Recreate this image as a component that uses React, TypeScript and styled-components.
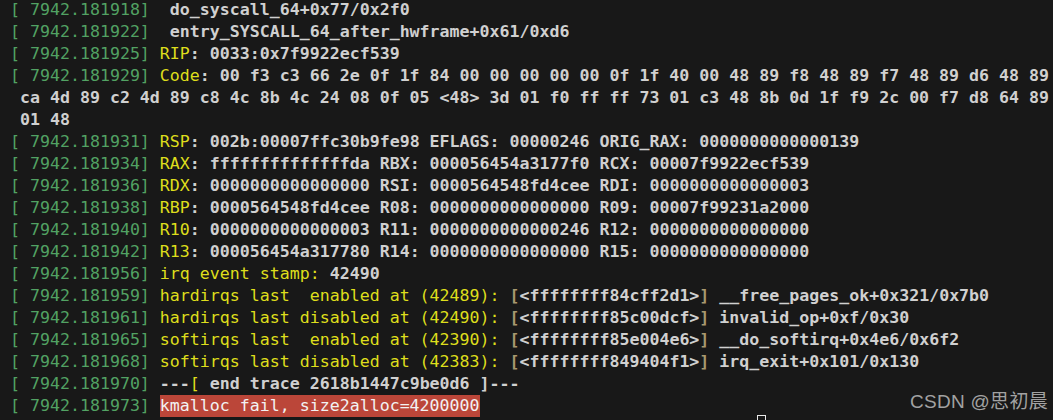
import React from "react";
import styled, { createGlobalStyle } from "styled-components";

const Global = createGlobalStyle`
  html, body {
    margin: 0;
    padding: 0;
    background: #181818;
    overflow: hidden;
  }
  #root {
    width: 1053px;
    height: 420px;
  }
`;

const Screen = styled.div`
  position: relative;
  width: 1053px;
  height: 420px;
  background: #181818;
  overflow: hidden;
`;

const Terminal = styled.div`
  display: flex;
  flex-direction: column;
  margin-top: -1px;
  padding-left: 10px;
  font-family: "DejaVu Sans Mono", "Liberation Mono", monospace;
  font-size: 16.6px;
  line-height: 22px;
  white-space: pre;
`;

const Line = styled.div`
  display: flex;
  height: 22px;
`;

const Stamp = styled.span`
  color: #52a263;
  font-weight: normal;
`;

type Kind = "w" | "y" | "b" | "hl";

const Seg = styled.span<{ $kind: Kind }>`
  color: ${(p) =>
    p.$kind === "y"
      ? "#dede1c"
      : p.$kind === "b"
      ? "#a8996f"
      : p.$kind === "hl"
      ? "#f2f2f2"
      : "#d0d0d0"};
  font-weight: ${(p) => (p.$kind === "y" || p.$kind === "hl" ? "normal" : "bold")};
  background: ${(p) => (p.$kind === "hl" ? "#bb4639" : "transparent")};
`;

const Watermark = styled.div`
  position: absolute;
  right: 5px;
  bottom: 6px;
  font-family: "Liberation Sans", "Noto Sans CJK SC", sans-serif;
  font-size: 19px;
  line-height: 24px;
  color: #a2a2a2;
  letter-spacing: 0.3px;
`;

const Cursor = styled.div`
  position: absolute;
  left: 757px;
  top: 415px;
  width: 7px;
  height: 8px;
  border: 1.5px solid #e8e8e8;
  background: #181818;
`;

type Row = { t?: string; parts: [Kind, string][] };

const rows: Row[] = [
  { t: "181918", parts: [["w", " do_syscall_64+0x77/0x2f0"]] },
  { t: "181922", parts: [["w", " entry_SYSCALL_64_after_hwframe+0x61/0xd6"]] },
  { t: "181925", parts: [["y", "RIP"], ["w", ": 0033:0x7f9922ecf539"]] },
  {
    t: "181929",
    parts: [
      ["y", "Code"],
      ["w", ": 00 f3 c3 66 2e 0f 1f 84 00 00 00 00 00 0f 1f 40 00 48 89 f8 48 89 f7 48 89 d6 48 89"],
    ],
  },
  {
    parts: [
      ["w", " ca 4d 89 c2 4d 89 c8 4c 8b 4c 24 08 0f 05 <48> 3d 01 f0 ff ff 73 01 c3 48 8b 0d 1f f9 2c 00 f7 d8 64 89"],
    ],
  },
  { parts: [["w", " 01 48"]] },
  {
    t: "181931",
    parts: [["y", "RSP"], ["w", ": 002b:00007ffc30b9fe98 EFLAGS: 00000246 ORIG_RAX: 0000000000000139"]],
  },
  {
    t: "181934",
    parts: [["y", "RAX"], ["w", ": ffffffffffffffda RBX: 000056454a3177f0 RCX: 00007f9922ecf539"]],
  },
  {
    t: "181936",
    parts: [["y", "RDX"], ["w", ": 0000000000000000 RSI: 0000564548fd4cee RDI: 0000000000000003"]],
  },
  {
    t: "181938",
    parts: [["y", "RBP"], ["w", ": 0000564548fd4cee R08: 0000000000000000 R09: 00007f99231a2000"]],
  },
  {
    t: "181940",
    parts: [["y", "R10"], ["w", ": 0000000000000003 R11: 0000000000000246 R12: 0000000000000000"]],
  },
  {
    t: "181942",
    parts: [["y", "R13"], ["w", ": 000056454a317780 R14: 0000000000000000 R15: 0000000000000000"]],
  },
  { t: "181956", parts: [["y", "irq event stamp: "], ["w", "42490"]] },
  {
    t: "181959",
    parts: [
      ["y", "hardirqs last  enabled at (42489): "],
      ["b", "["],
      ["w", "<ffffffff84cff2d1>"],
      ["b", "]"],
      ["w", " __free_pages_ok+0x321/0x7b0"],
    ],
  },
  {
    t: "181961",
    parts: [
      ["y", "hardirqs last disabled at (42490): "],
      ["b", "["],
      ["w", "<ffffffff85c00dcf>"],
      ["b", "]"],
      ["w", " invalid_op+0xf/0x30"],
    ],
  },
  {
    t: "181965",
    parts: [
      ["y", "softirqs last  enabled at (42390): "],
      ["b", "["],
      ["w", "<ffffffff85e004e6>"],
      ["b", "]"],
      ["w", " __do_softirq+0x4e6/0x6f2"],
    ],
  },
  {
    t: "181968",
    parts: [
      ["y", "softirqs last disabled at (42383): "],
      ["b", "["],
      ["w", "<ffffffff849404f1>"],
      ["b", "]"],
      ["w", " irq_exit+0x101/0x130"],
    ],
  },
  {
    t: "181970",
    parts: [
      ["w", "---"],
      ["y", "["],
      ["w", " end trace 2618b1447c9be0d6 ]---"],
    ],
  },
  { t: "181973", parts: [["hl", "kmalloc fail, size2alloc=4200000"]] },
];

export default function App() {
  return (
    <Screen>
      <Global />
      <Terminal>
        {rows.map((r, i) => (
          <Line key={i}>
            {r.t && <Stamp>{`[ 7942.${r.t}] `}</Stamp>}
            {r.parts.map(([k, s], j) => (
              <Seg key={j} $kind={k}>
                {s}
              </Seg>
            ))}
          </Line>
        ))}
      </Terminal>
      <Cursor />
      <Watermark>CSDN @思初晨</Watermark>
    </Screen>
  );
}
